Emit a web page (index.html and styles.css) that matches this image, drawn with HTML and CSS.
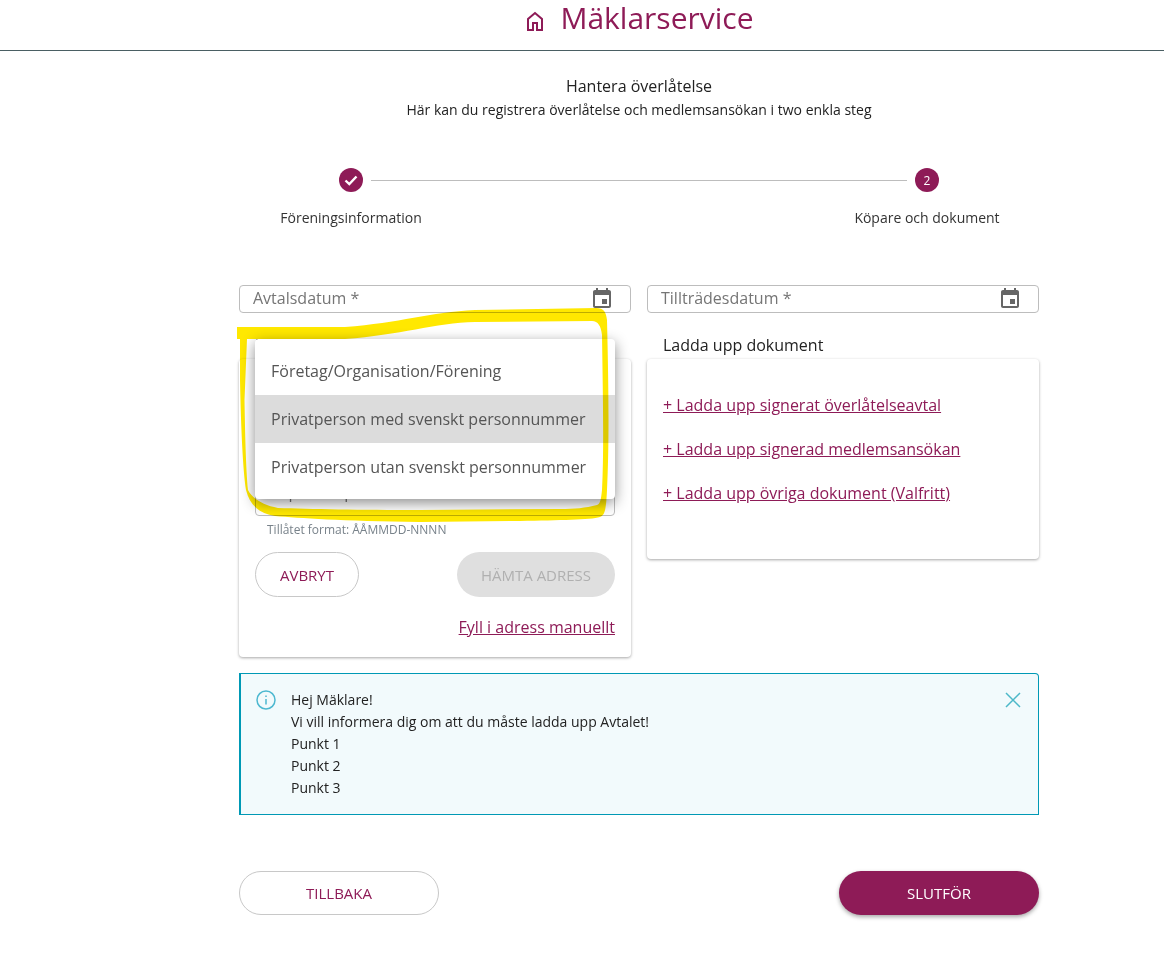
FILE: index.html
```html
<!DOCTYPE html>
<html lang="sv">
<head>
    <meta charset="UTF-8">
    <meta name="viewport" content="width=device-width, initial-scale=1.0">
    <title>Mäklarservice</title>
    <link rel="stylesheet" href="styles.css">
</head>
<body>
    <header class="site-header">
        <svg class="home-icon" viewBox="0 0 18 20" width="18" height="20">
            <path d="M2 19V8L9 2l7 6v11h-5v-7H7v7z"/>
        </svg>
        <span class="site-title">Mäklarservice</span>
    </header>

    <main class="container">
        <div class="intro">
            <h1>Hantera överlåtelse</h1>
            <p>Här kan du registrera överlåtelse och medlemsansökan i two enkla steg</p>
        </div>

        <div class="stepper">
            <div class="stepper-track">
                <span class="step-dot">
                    <svg viewBox="0 0 24 24" width="24" height="24">
                        <path d="M6.5 12.5l3.8 3.6 7.2-7.6"/>
                    </svg>
                </span>
                <span class="step-line"></span>
                <span class="step-dot">2</span>
            </div>
            <div class="stepper-labels">
                <span>Föreningsinformation</span>
                <span>Köpare och dokument</span>
            </div>
        </div>

        <div class="two-cols date-row">
            <div class="field">
                <span class="placeholder">Avtalsdatum *</span>
                <svg class="calendar" viewBox="0 0 24 24" width="24" height="24">
                    <path d="M17 12h-5v5h5v-5zM16 1v2H8V1H6v2H5c-1.11 0-1.99.9-1.99 2L3 19c0 1.1.89 2 2 2h14c1.1 0 2-.9 2-2V5c0-1.1-.9-2-2-2h-1V1h-2zm3 18H5V8h14v11z"/>
                </svg>
            </div>
            <div class="field">
                <span class="placeholder">Tillträdesdatum *</span>
                <svg class="calendar" viewBox="0 0 24 24" width="24" height="24">
                    <path d="M17 12h-5v5h5v-5zM16 1v2H8V1H6v2H5c-1.11 0-1.99.9-1.99 2L3 19c0 1.1.89 2 2 2h14c1.1 0 2-.9 2-2V5c0-1.1-.9-2-2-2h-1V1h-2zm3 18H5V8h14v11z"/>
                </svg>
            </div>
        </div>

        <div class="two-cols panels">
            <section class="panel">
                <h2>Lägg till köpare</h2>
                <div class="card buyer-card">
                    <div class="field inner-field">
                        <span class="placeholder">Köparens personnummer *</span>
                    </div>
                    <p class="hint">Tillåtet format: ÅÅMMDD-NNNN</p>
                    <div class="buyer-actions">
                        <button class="btn btn-outline btn-cancel">AVBRYT</button>
                        <button class="btn btn-disabled">HÄMTA ADRESS</button>
                    </div>
                    <a class="link manual-link" href="#">Fyll i adress manuellt</a>
                </div>
                <ul class="dropdown">
                    <li>Företag/Organisation/Förening</li>
                    <li class="active">Privatperson med svenskt personnummer</li>
                    <li>Privatperson utan svenskt personnummer</li>
                </ul>
            </section>

            <section class="panel">
                <h2>Ladda upp dokument</h2>
                <div class="card upload-card">
                    <a class="link" href="#">+ Ladda upp signerat överlåtelseavtal</a>
                    <a class="link" href="#">+ Ladda upp signerad medlemsansökan</a>
                    <a class="link" href="#">+ Ladda upp övriga dokument (Valfritt)</a>
                </div>
            </section>
        </div>

        <div class="alert">
            <svg class="alert-icon" viewBox="0 0 20 20" width="20" height="20">
                <circle cx="10" cy="10" r="9"/>
                <path d="M10 9v5.5M10 5.5v1.5"/>
            </svg>
            <div class="alert-text">
                <p>Hej Mäklare!</p>
                <p>Vi vill informera dig om att du måste ladda upp Avtalet!</p>
                <p>Punkt 1</p>
                <p>Punkt 2</p>
                <p>Punkt 3</p>
            </div>
            <svg class="alert-close" viewBox="0 0 16 16" width="16" height="16">
                <path d="M1 1l14 14M15 1L1 15"/>
            </svg>
        </div>

        <div class="footer-actions">
            <button class="btn btn-outline btn-wide">TILLBAKA</button>
            <button class="btn btn-primary btn-wide">SLUTFÖR</button>
        </div>
    </main>

    <!-- yellow marker scribble drawn on top of the screenshot -->
    <svg class="scribble" viewBox="0 0 1164 965" width="1164" height="965">
        <path fill-rule="evenodd" d="M237 327L345 327C400 323 430 312 475 310L596 308C604 308 606 312 607 320C609 400 609 450 607 490C606 510 605 515 600 517C590 520 560 520 520 521L420 522C340 521 300 518 275 516C258 513 250 505 246 490C243 470 241 430 240 380L240 339L237 339Z M247 339L345 339C400 335 435 323 475 322L592 321C598 321 601 326 602 335C603 400 604 450 602 490C601 500 600 504 597 505C585 508 575 509 560 509L420 510C360 510 310 509 278 508C262 505 252 498 248 490C246 470 245 430 244.5 400Z"/>
    </svg>
</body>
</html>
```

FILE: styles.css
```css
* {
    margin: 0;
    padding: 0;
    box-sizing: border-box;
    font-family: "Open Sans", sans-serif;
}

body {
    position: relative;
    background-color: white;
    color: #222;
    min-height: 965px;
    overflow: hidden;
}

.site-header {
    height: 51px;
    padding-left: 116px;
    border-bottom: 1px solid #4a5f63;
    display: flex;
    justify-content: center;
    align-items: flex-start;
    gap: 16px;
    color: #8e1b57;
}

.home-icon {
    margin-top: 11px;
    fill: none;
    stroke: #8e1b57;
    stroke-width: 2;
}

.site-title {
    font-size: 30px;
    line-height: 36px;
}

.container {
    width: 800px;
    margin-left: 239px;
}

.intro {
    margin-top: 23px;
    text-align: center;
}

.intro h1 {
    font-size: 16px;
    font-weight: 400;
    line-height: 24px;
}

.intro p {
    font-size: 14px;
    line-height: 24px;
}

.stepper {
    margin-top: 46px;
}

.stepper-track {
    display: flex;
    align-items: center;
    padding: 0 100px;
}

.step-dot {
    width: 24px;
    height: 24px;
    border-radius: 50%;
    background-color: #8e1b57;
    color: white;
    font-size: 12px;
    display: flex;
    justify-content: center;
    align-items: center;
}

.step-dot svg {
    fill: none;
    stroke: white;
    stroke-width: 2.4;
}

.step-line {
    flex: 1;
    height: 1px;
    margin: 0 8px;
    background-color: #bdbdbd;
}

.stepper-labels {
    display: flex;
    justify-content: space-between;
    margin-top: 16px;
    font-size: 14px;
    line-height: 20px;
    color: #333;
}

.stepper-labels span {
    width: 224px;
    text-align: center;
}

.two-cols {
    display: grid;
    grid-template-columns: 1fr 1fr;
    gap: 16px;
    align-items: start;
}

.date-row {
    margin-top: 57px;
}

.field {
    height: 28px;
    border: 1px solid #bdbdbd;
    border-radius: 4px;
    padding: 0 4px 2px 13px;
    display: flex;
    justify-content: space-between;
    align-items: center;
}

.inner-field {
    height: 40px;
    padding-bottom: 8px;
}

.placeholder {
    font-size: 16px;
    color: #757575;
}

.calendar {
    margin-right: 12px;
    margin-bottom: -2px;
    fill: #666;
}

.panels {
    margin-top: 20px;
}

.panel {
    position: relative;
}

.panel h2 {
    font-size: 16px;
    font-weight: 400;
    line-height: 24px;
    margin-bottom: 2px;
    padding-left: 16px;
}

.card {
    background-color: white;
    border-radius: 4px;
    box-shadow: 0 1px 3px rgba(0, 0, 0, 0.35);
}

.buyer-card {
    padding: 117px 16px 18px;
    display: flex;
    flex-direction: column;
}

.hint {
    font-size: 12px;
    line-height: 16px;
    margin-top: 6px;
    padding-left: 12px;
    color: #78828a;
}

.buyer-actions {
    display: flex;
    justify-content: space-between;
    margin-top: 14px;
    margin-bottom: 18px;
}

.btn {
    height: 45px;
    border-radius: 23px;
    font-size: 15px;
    background-color: white;
    border: none;
}

.btn-outline {
    border: 1px solid #c8c8c8;
    color: #8e1b57;
}

.btn-cancel {
    width: 104px;
}

.btn-disabled {
    width: 158px;
    background-color: #dfdfdf;
    color: #b0b0b0;
}

.btn-wide {
    width: 200px;
    height: 44px;
}

.btn-primary {
    background-color: #8e1b57;
    color: white;
    box-shadow: 0 2px 4px rgba(0, 0, 0, 0.35);
}

.link {
    font-size: 16px;
    line-height: 24px;
    color: #8e1b57;
    text-decoration: underline;
}

.manual-link {
    align-self: flex-end;
}

.upload-card {
    padding: 34px 16px 54px;
    display: flex;
    flex-direction: column;
    align-items: flex-start;
    gap: 20px;
}

.dropdown {
    position: absolute;
    top: 6px;
    left: 16px;
    right: 16px;
    padding: 8px 0;
    list-style: none;
    background-color: white;
    border-radius: 4px;
    box-shadow: 0 4px 14px rgba(0, 0, 0, 0.45);
}

.dropdown li {
    height: 48px;
    line-height: 48px;
    padding-left: 16px;
    font-size: 16px;
    color: #555;
}

.dropdown li.active {
    background-color: #dcdcdc;
}

.alert {
    margin-top: 16px;
    height: 142px;
    padding: 15px 16px 0 15px;
    background-color: #f2fafc;
    border: 1px solid #0099b5;
    border-left-width: 2px;
    border-top-right-radius: 4px;
    display: flex;
    align-items: flex-start;
}

.alert-icon {
    margin-top: 1px;
    fill: none;
    stroke: #4db8d0;
    stroke-width: 1.5;
}

.alert-text {
    flex: 1;
    margin-left: 15px;
    font-size: 14px;
    line-height: 22px;
}

.alert-close {
    margin-top: 3px;
    margin-right: 1px;
    fill: none;
    stroke: #4db8c8;
    stroke-width: 1.5;
}

.footer-actions {
    display: flex;
    justify-content: space-between;
    margin-top: 56px;
}

.scribble {
    position: absolute;
    top: 0;
    left: 0;
    pointer-events: none;
    fill: #ffe800;
    mix-blend-mode: multiply;
}
```
